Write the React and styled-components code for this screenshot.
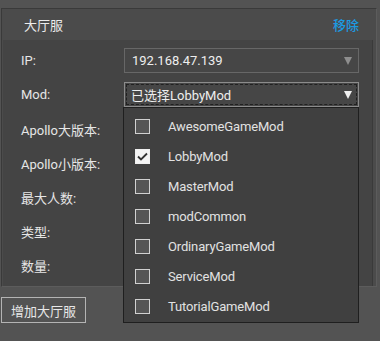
import React from "react";
import styled, { createGlobalStyle } from "styled-components";

const Global = createGlobalStyle`
  html, body { margin: 0; padding: 0; }
  body {
    background: #535353;
    font-family: Roboto, "Noto Sans CJK SC", sans-serif;
    font-size: 13px;
    color: #e4e4e4;
  }
`;

const Page = styled.div`
  position: relative;
  width: 380px;
  height: 341px;
  padding-top: 8px;
  box-sizing: border-box;
  overflow: hidden;
`;

const Panel = styled.div`
  margin-left: 1px;
  width: 376px;
  box-sizing: border-box;
  border: 1px solid #3a3a3a;
  border-right-color: #5c5c5c;
  border-bottom-color: #5c5c5c;
  background: #4b4b4b;
`;

const Header = styled.div`
  height: 31px;
  display: flex;
  align-items: center;
  justify-content: space-between;
  padding: 0 17px 0 22px;
  font-size: 13px;
  color: #ececec;
`;

const Remove = styled.span`
  color: #1b9be3;
  font-weight: 500;
`;

const Body = styled.div`
  margin: 0 3px 0 1px;
  background: #444444;
  border-right: 1px solid #3a3a3a;
  padding: 8px 0 9px 0;
  display: flex;
  flex-direction: column;
  gap: 9px;
`;

const Row = styled.div`
  height: 25px;
  display: grid;
  grid-template-columns: 103px 235px;
  align-items: center;
  padding-left: 18px;
`;

const Label = styled.span`
  font-size: 13px;
  color: #e6e6e6;
  padding-top: ${(p) => (p.$shift ? 2 : 0)}px;
`;

const Select = styled.div`
  position: relative;
  height: 25px;
  box-sizing: border-box;
  border: 1px solid ${(p) => (p.$focus ? "#8c8c8c" : "#676767")};
  background: #464646;
  display: flex;
  align-items: center;
  padding-left: ${(p) => (p.$focus ? 6 : 7)}px;
  color: #eeeeee;
  font-size: 13px;
  &::after {
    content: "";
    display: ${(p) => (p.$focus ? "block" : "none")};
    position: absolute;
    inset: 1px;
    border: 1px dashed #202020;
    pointer-events: none;
  }
`;

const Arrow = styled.span`
  position: absolute;
  right: 6px;
  top: 8px;
  width: 0;
  height: 0;
  border-left: 4px solid transparent;
  border-right: 4px solid transparent;
  border-top: 8px solid ${(p) => (p.$light ? "#f0f0f0" : "#8e8e8e")};
`;

const Popup = styled.div`
  position: absolute;
  left: 123px;
  top: 107px;
  width: 236px;
  box-sizing: border-box;
  background: #404040;
  border: 1px solid #1f1f1f;
  padding: 3px 0 1px 0;
  display: flex;
  flex-direction: column;
`;

const Item = styled.div`
  height: 30px;
  display: flex;
  align-items: center;
  padding-left: 11px;
  gap: 18px;
  color: #e2e2e2;
  font-size: 13px;
  letter-spacing: -0.15px;
`;

const Box = styled.span`
  width: 15px;
  height: 15px;
  box-sizing: border-box;
  border: 1px solid ${(p) => (p.$checked ? "#f0f0f0" : "#d0d0d0")};
  background: ${(p) => (p.$checked ? "#f4f4f4" : "#555555")};
  display: flex;
  align-items: center;
  justify-content: center;
`;

const AddButton = styled.button`
  margin: 10px 0 0 1px;
  height: 26px;
  width: 85px;
  padding: 0;
  box-sizing: border-box;
  background: transparent;
  border: 1px solid #b4b4b4;
  color: #e8e8e8;
  font-family: "Noto Sans CJK SC", sans-serif;
  font-size: 13px;
`;

const mods = [
  "AwesomeGameMod",
  "LobbyMod",
  "MasterMod",
  "modCommon",
  "OrdinaryGameMod",
  "ServiceMod",
  "TutorialGameMod",
];

const labels = ["Apollo大版本:", "Apollo小版本:", "最大人数:", "类型:", "数量:"];

export default function App() {
  return (
    <>
      <Global />
      <Page>
        <Panel>
          <Header>
            <span>大厅服</span>
            <Remove>移除</Remove>
          </Header>
          <Body>
            <Row>
              <Label>IP:</Label>
              <Select>
                192.168.47.139
                <Arrow />
              </Select>
            </Row>
            <Row>
              <Label>Mod:</Label>
              <Select $focus>
                已选择LobbyMod
                <Arrow $light />
              </Select>
            </Row>
            {labels.map((l) => (
              <Row key={l}>
                <Label $shift>{l}</Label>
              </Row>
            ))}
          </Body>
        </Panel>
        <AddButton>增加大厅服</AddButton>
        <Popup>
          {mods.map((m) => (
            <Item key={m}>
              <Box $checked={m === "LobbyMod"}>
                {m === "LobbyMod" && (
                  <svg width="13" height="13" viewBox="0 0 13 13">
                    <path d="M2 6.5 L5 9.5 L11 3.5" fill="none" stroke="#333" strokeWidth="1.8" />
                  </svg>
                )}
              </Box>
              <span>{m}</span>
            </Item>
          ))}
        </Popup>
      </Page>
    </>
  );
}
